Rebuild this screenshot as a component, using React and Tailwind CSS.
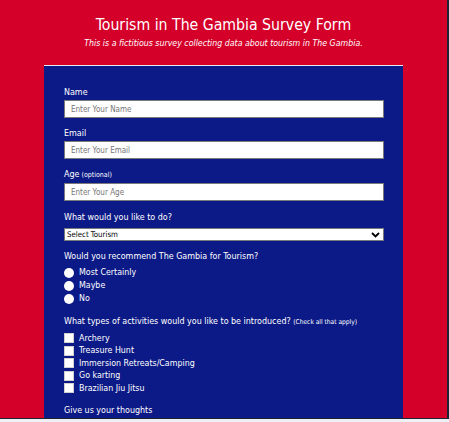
import React from "react";

const font = { fontFamily: '"DejaVu Sans Condensed", "DejaVu Sans", Verdana, sans-serif' };

function Field({ label, extra, placeholder, className = "" }) {
  return (
    <div className={"flex flex-col " + className}>
      <label className="text-[8.9px] leading-[11px] text-white">
        {label}
        {extra && <span className="text-[7px]"> {extra}</span>}
      </label>
      <input
        className="mt-[2px] h-[18px] w-[320px] bg-white border border-[#7a7a7a] px-[6px] text-[8px] text-black placeholder:text-[#767676] outline-none"
        placeholder={placeholder}
      />
    </div>
  );
}

export default function App() {
  return (
    <div className="w-[449px] h-[422px] overflow-hidden bg-[#eef0f3] flex flex-col" style={font}>
      <div className="flex h-[418px] shrink-0">
        <div className="w-[447px] h-full bg-[#d50029] flex flex-col items-center">
          <h1 className="mt-[15px] text-[15.7px] leading-[20px] text-white">Tourism in The Gambia Survey Form</h1>
          <p className="mt-[3px] text-[8.75px] leading-[11px] italic text-white">
            This is a fictitious survey collecting data about tourism in The Gambia.
          </p>
          <div className="mt-[16px] w-[359px] flex-1 bg-[#0c1a87] border-t border-[#e8e8f0] px-[20px] pt-[21px] flex flex-col">
            <Field label="Name" placeholder="Enter Your Name" />
            <Field className="mt-[10px]" label="Email" placeholder="Enter Your Email" />
            <Field className="mt-[10px]" label="Age" extra="(optional)" placeholder="Enter Your Age" />
            <div className="mt-[11px] text-[8.9px] leading-[11px] text-white">What would you like to do?</div>
            <div className="mt-[5px] h-[13px] w-[320px] bg-white border border-[#7a7a7a] flex items-center justify-between pl-[2px] pr-[3px]">
              <span className="text-[7.8px] leading-[10px] text-black">Select Tourism</span>
              <svg width="9" height="6" viewBox="0 0 9 6">
                <path d="M1 1 L4.5 4.5 L8 1" stroke="#000" strokeWidth="1.8" fill="none" />
              </svg>
            </div>
            <div className="mt-[10px] text-[8.9px] leading-[11px] text-white">Would you recommend The Gambia for Tourism?</div>
            <div className="mt-[4px] flex flex-col">
              {["Most Certainly", "Maybe", "No"].map((t) => (
                <div key={t} className="flex items-center h-[13px]">
                  <span className="w-[10px] h-[10px] rounded-full bg-white" />
                  <span className="ml-[5px] text-[8.8px] leading-[11px] text-white">{t}</span>
                </div>
              ))}
            </div>
            <div className="mt-[11px] text-[8.9px] leading-[11px] text-white whitespace-nowrap">
              What types of activities would you like to be introduced?{" "}
              <span className="text-[6.6px]">(Check all that apply)</span>
            </div>
            <div className="mt-[4px] flex flex-col">
              {["Archery", "Treasure Hunt", "Immersion Retreats/Camping", "Go karting", "Brazilian Jiu Jitsu"].map((t) => (
                <div key={t} className="flex items-center h-[12.5px]">
                  <span className="w-[10px] h-[10px] bg-white border border-[#d0d0d0]" />
                  <span className="ml-[5px] text-[8.8px] leading-[11px] text-white">{t}</span>
                </div>
              ))}
            </div>
            <div className="mt-[10px] text-[8.9px] leading-[11px] text-white">Give us your thoughts</div>
          </div>
        </div>
        <div className="w-[2px] h-full bg-[#1c2434]" />
      </div>
      <div className="h-[1px] shrink-0 bg-[#1c2434]" />
      <div className="flex-1 bg-[#eef0f3]" />
    </div>
  );
}
